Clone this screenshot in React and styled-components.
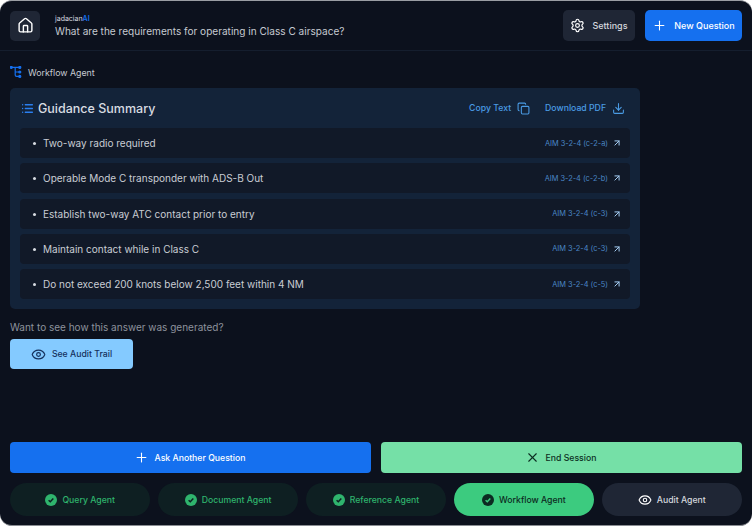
import React from 'react';
import styled, { createGlobalStyle } from 'styled-components';
import { Home, Settings, Plus, Copy, Download, ArrowUpRight, Eye, X, List } from 'lucide-react';

const GlobalStyle = createGlobalStyle`
  html, body {
    margin: 0;
    padding: 0;
    background: #ffffff;
  }
  * {
    box-sizing: border-box;
  }
`;

const Shell = styled.div`
  width: 752px;
  height: 526px;
  background: #0c111d;
  border-radius: 12px;
  border-top: 1px solid #9a9da3;
  border-bottom: 1px solid #8a8d93;
  display: flex;
  flex-direction: column;
  font-family: Inter, "Liberation Sans", sans-serif;
  overflow: hidden;
`;

const Header = styled.header`
  height: 50px;
  flex: none;
  display: flex;
  align-items: center;
  padding: 0 10px;
  gap: 10px;
  border-bottom: 1px solid #151e2e;
`;

const IconButton = styled.button`
  width: 30px;
  height: 30px;
  border: 0;
  border-radius: 5px;
  background: #1f2635;
  color: #fff;
  display: flex;
  align-items: center;
  justify-content: center;
  padding: 0;
`;

const TitleBlock = styled.div`
  flex: 1;
  display: flex;
  flex-direction: column;
  padding: 1px 0 0 5px;
`;

const Brand = styled.div`
  font-size: 7px;
  line-height: 10px;
  color: #d8dbe0;
`;

const BrandAccent = styled.span`
  color: #1570ef;
  font-weight: 600;
`;

const Question = styled.div`
  font-size: 10.07px;
  line-height: 15px;
  color: #c6cad1;
`;

const HeadButton = styled.button`
  height: 31px;
  width: ${({ $width }) => $width}px;
  border: 0;
  border-radius: 5px;
  background: ${({ $primary }) => ($primary ? '#1570ef' : '#1f2635')};
  color: ${({ $primary }) => ($primary ? '#ffffff' : '#d5d8de')};
  font-family: inherit;
  font-size: 9px;
  font-weight: 500;
  display: flex;
  align-items: center;
  justify-content: center;
  gap: 7px;
  padding: 0;
`;

const Main = styled.main`
  flex: 1;
  display: flex;
  flex-direction: column;
  padding: 0 10px;
`;

const AgentLabel = styled.div`
  height: 37px;
  padding-top: 5px;
  display: flex;
  align-items: center;
  gap: 6px;
  font-size: 8.8px;
  font-weight: 400;
  color: #c6cad1;
`;

const SummaryCard = styled.section`
  width: 630px;
  height: 221px;
  background: #132339;
  border-radius: 5px;
  padding: 0 10px;
`;

const SummaryHead = styled.div`
  height: 40px;
  display: flex;
  align-items: center;
  padding: 0 5px 0 1px;
`;

const SummaryTitle = styled.h2`
  flex: 1;
  margin: 0 0 0 4px;
  font-size: 12.5px;
  font-weight: 500;
  color: #d8dce2;
`;

const LinkAction = styled.span`
  display: flex;
  align-items: center;
  gap: 6px;
  margin-left: 15px;
  font-size: 8.7px;
  font-weight: 500;
  color: #4a9be4;
`;

const Rows = styled.ul`
  list-style: none;
  margin: 0;
  padding: 0;
  display: flex;
  flex-direction: column;
  gap: 5.3px;
`;

const Row = styled.li`
  height: 30px;
  background: #111928;
  border-radius: 4px;
  display: flex;
  align-items: center;
  padding: 0 8px 0 13px;
`;

const RowText = styled.span`
  flex: 1;
  font-size: 10px;
  color: #c9cdd4;

  &::before {
    content: '';
    display: inline-block;
    width: 3px;
    height: 3px;
    border-radius: 50%;
    background: #d8dce2;
    margin-right: 7px;
    vertical-align: 2px;
  }
`;

const Reference = styled.span`
  display: flex;
  align-items: center;
  gap: 4px;
  font-size: 7.4px;
  color: #4a86c5;
`;

const AuditPrompt = styled.p`
  margin: 12px 0 5px;
  font-size: 10px;
  line-height: 13px;
  color: #8d929c;
`;

const AuditButton = styled.button`
  width: 123px;
  height: 30px;
  border: 0;
  border-radius: 4px;
  background: #84caff;
  color: #14305c;
  font-family: inherit;
  font-size: 8.7px;
  font-weight: 500;
  display: flex;
  align-items: center;
  justify-content: center;
  gap: 6px;
  padding: 0;
`;

const Footer = styled.footer`
  display: flex;
  flex-direction: column;
  gap: 10px;
  padding: 0 10px 9px;
`;

const ActionRow = styled.div`
  display: grid;
  grid-template-columns: 1fr 1fr;
  gap: 10px;
`;

const ActionButton = styled.button`
  height: 31px;
  border: 0;
  border-radius: 4px;
  background: ${({ $tone }) => ($tone === 'green' ? '#75e0a7' : '#1570ef')};
  color: ${({ $tone }) => ($tone === 'green' ? '#0c2f22' : '#ffffff')};
  font-family: inherit;
  font-size: 8.7px;
  font-weight: 500;
  display: flex;
  align-items: center;
  justify-content: center;
  gap: 6px;
  padding: 0 2px 0 0;
`;

const AgentRow = styled.div`
  display: grid;
  grid-template-columns: repeat(5, 1fr);
  gap: 7.5px;
`;

const tabColors = {
  done: { bg: '#0e1f22', fg: '#2fb46d' },
  active: { bg: '#3ccb7f', fg: '#0c2a21' },
  idle: { bg: '#1f2635', fg: '#d5d8de' },
};

const AgentTab = styled.div`
  height: 33px;
  border-radius: 17px;
  background: ${({ $state }) => tabColors[$state].bg};
  color: ${({ $state }) => tabColors[$state].fg};
  font-size: 8.7px;
  font-weight: 500;
  display: flex;
  align-items: center;
  justify-content: center;
  gap: 5px;
`;

const CheckDisc = styled.span`
  width: 12px;
  height: 12px;
  border-radius: 50%;
  background: ${({ $dark }) => ($dark ? '#0c2a21' : '#2fb46d')};
  color: ${({ $dark }) => ($dark ? '#3ccb7f' : '#0e1f22')};
  display: flex;
  align-items: center;
  justify-content: center;
`;

const WorkflowIcon = () => (
  <svg width="12" height="12" viewBox="0 0 12 12" fill="none" stroke="#1570ef" strokeWidth="1.2">
    <circle cx="1.2" cy="1.4" r="1" fill="#1570ef" />
    <circle cx="9.8" cy="1.4" r="1" fill="#1570ef" />
    <circle cx="9.8" cy="6" r="1" fill="#1570ef" />
    <circle cx="9.8" cy="10.4" r="1" fill="#1570ef" />
    <path d="M2 1.4h7M5.2 1.4v7.6c0 .9.5 1.4 1.4 1.4H9M5.2 6H9" />
  </svg>
);

const Check = ({ dark }) => (
  <CheckDisc $dark={dark}>
    <svg width="8" height="8" viewBox="0 0 8 8" fill="none" stroke="currentColor" strokeWidth="1.5">
      <path d="M1.6 4.2l1.7 1.6 3-3.2" />
    </svg>
  </CheckDisc>
);

const items = [
  { text: 'Two-way radio required', ref: 'AIM 3-2-4 (c-2-a)' },
  { text: 'Operable Mode C transponder with ADS-B Out', ref: 'AIM 3-2-4 (c-2-b)' },
  { text: 'Establish two-way ATC contact prior to entry', ref: 'AIM 3-2-4 (c-3)' },
  { text: 'Maintain contact while in Class C', ref: 'AIM 3-2-4 (c-3)' },
  { text: 'Do not exceed 200 knots below 2,500 feet within 4 NM', ref: 'AIM 3-2-4 (c-5)' },
];

const App = () => (
  <Shell>
    <GlobalStyle />
    <Header>
      <IconButton aria-label="Home">
        <Home size={17} strokeWidth={2} />
      </IconButton>
      <TitleBlock>
        <Brand>
          jadacian<BrandAccent>AI</BrandAccent>
        </Brand>
        <Question>What are the requirements for operating in Class C airspace?</Question>
      </TitleBlock>
      <HeadButton $width={72}>
        <Settings size={15} strokeWidth={1.9} color="#fff" />
        Settings
      </HeadButton>
      <HeadButton $width={97} $primary>
        <Plus size={15} strokeWidth={1.7} />
        New Question
      </HeadButton>
    </Header>
    <Main>
      <AgentLabel>
        <WorkflowIcon />
        Workflow Agent
      </AgentLabel>
      <SummaryCard>
        <SummaryHead>
          <List size={13} color="#2a7ff0" strokeWidth={2.6} />
          <SummaryTitle>Guidance Summary</SummaryTitle>
          <LinkAction>
            Copy Text
            <Copy size={13} strokeWidth={2} />
          </LinkAction>
          <LinkAction>
            Download PDF
            <Download size={13} strokeWidth={2} />
          </LinkAction>
        </SummaryHead>
        <Rows>
          {items.map(item => (
            <Row key={item.text}>
              <RowText>{item.text}</RowText>
              <Reference>
                {item.ref}
                <ArrowUpRight size={10} color="#a5cdf3" strokeWidth={2.4} />
              </Reference>
            </Row>
          ))}
        </Rows>
      </SummaryCard>
      <AuditPrompt>Want to see how this answer was generated?</AuditPrompt>
      <AuditButton>
        <Eye size={15} strokeWidth={1.9} />
        See Audit Trail
      </AuditButton>
    </Main>
    <Footer>
      <ActionRow>
        <ActionButton>
          <Plus size={15} strokeWidth={1.7} />
          Ask Another Question
        </ActionButton>
        <ActionButton $tone="green">
          <X size={15} strokeWidth={1.8} />
          End Session
        </ActionButton>
      </ActionRow>
      <AgentRow>
        <AgentTab $state="done"><Check />Query Agent</AgentTab>
        <AgentTab $state="done"><Check />Document Agent</AgentTab>
        <AgentTab $state="done"><Check />Reference Agent</AgentTab>
        <AgentTab $state="active"><Check dark />Workflow Agent</AgentTab>
        <AgentTab $state="idle"><Eye size={14} strokeWidth={1.9} color="#fff" />Audit Agent</AgentTab>
      </AgentRow>
    </Footer>
  </Shell>
);

export default App;
